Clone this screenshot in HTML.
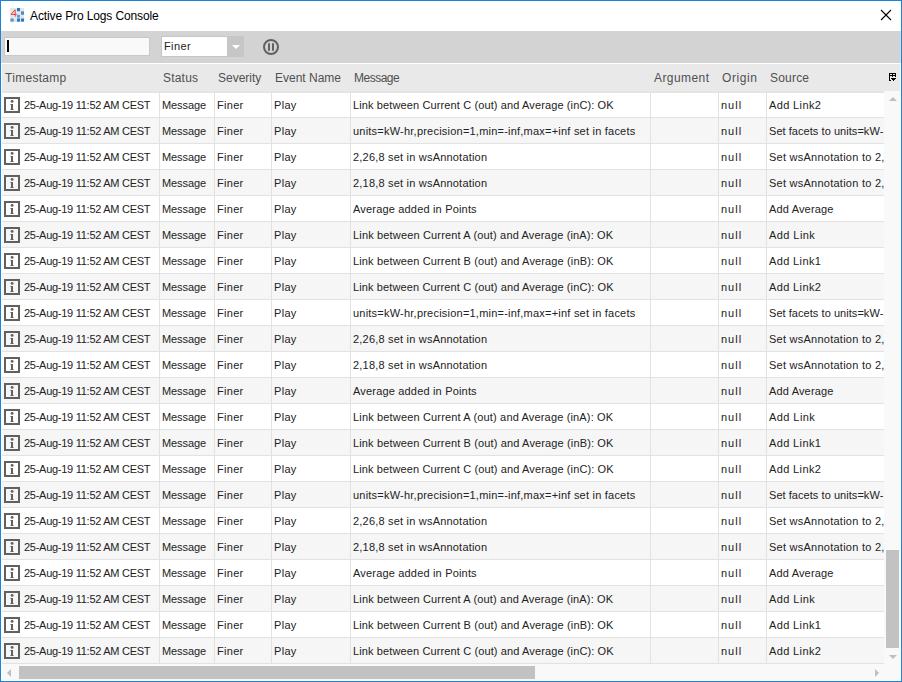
<!DOCTYPE html>
<html><head><meta charset="utf-8"><title>Active Pro Logs Console</title>
<style>
*{margin:0;padding:0;box-sizing:border-box}
html,body{width:902px;height:682px;overflow:hidden;background:#fff}
body{position:relative;font-family:"Liberation Sans",sans-serif;}
.a{position:absolute}
.t{position:absolute;white-space:nowrap;font-size:11px;line-height:13px;color:#222222}
.h{position:absolute;white-space:nowrap;font-size:12px;line-height:14px;color:#505050}
</style></head><body>

<div class="a" style="left:0;top:0;width:902px;height:682px;border:1px solid #1883d7;"></div>
<svg class="a" style="left:10px;top:8px" width="14" height="14" viewBox="0 0 14 14">
<rect x="0" y="0" width="14" height="14" fill="#e6e6e6"/>
<path d="M5 1.8 L1 6.4 L6.8 6.4 M5.1 1.8 L5.3 8.6" stroke="#e8383d" stroke-width="0.95" fill="none"/>
<rect x="7" y="0" width="3" height="3.2" fill="#1c7bd0"/>
<rect x="11" y="3.4" width="3" height="3.3" fill="#3d8fd6"/>
<rect x="7" y="6.9" width="3" height="2.8" fill="#5a9dd8"/>
<rect x="0.5" y="10.5" width="3.2" height="3.1" fill="#4d97d9"/>
<rect x="7" y="10.5" width="3" height="3.1" fill="#1c7bd0"/>
<rect x="11" y="10.5" width="3" height="3.1" fill="#1c7bd0"/>
</svg>
<div class="h" style="left:30px;top:9px;color:#000;letter-spacing:-0.12px">Active Pro Logs Console</div>
<svg class="a" style="left:880px;top:9px" width="13" height="13" viewBox="0 0 13 13"><path d="M1 1 L11 11 M11 1 L1 11" stroke="#000" stroke-width="1.1"/></svg>
<div class="a" style="left:1px;top:31px;width:900px;height:32px;background:#d3d3d3;border-left:1px solid #dedad8;border-right:1px solid #dedad8"></div>
<div class="a" style="left:4px;top:37px;width:146px;height:19px;background:#f9f9f9;border:1px solid #c8c8c8"></div>
<div class="a" style="left:7px;top:40px;width:2px;height:12px;background:#000"></div>
<div class="a" style="left:161px;top:36px;width:83px;height:21px;background:#c6c6c6"></div>
<div class="a" style="left:162px;top:37px;width:65px;height:19px;background:#fff"></div>
<div class="t" style="left:164px;top:40px;font-size:11px;letter-spacing:0.4px;color:#222222">Finer</div>
<svg class="a" style="left:232px;top:45px" width="8" height="4" viewBox="0 0 8 4"><path d="M0 0 L8 0 L4 4 Z" fill="#fff"/></svg>
<svg class="a" style="left:263px;top:39px" width="16" height="16" viewBox="0 0 16 16"><circle cx="8" cy="8" r="7" stroke="#626262" stroke-width="2" fill="none"/><rect x="5" y="4" width="2" height="8" rx="1" fill="#626262"/><rect x="9" y="4" width="2" height="8" rx="1" fill="#626262"/></svg>
<div class="a" style="left:2px;top:64px;width:898px;height:27px;background:#e9e9e9"></div>
<div class="a" style="left:2px;top:91px;width:882px;height:2px;background:#e4e4e4"></div>
<div class="h" style="left:5px;top:71px;letter-spacing:0.3px">Timestamp</div>
<div class="h" style="left:163px;top:71px;letter-spacing:0.2px">Status</div>
<div class="h" style="left:218px;top:71px;letter-spacing:0px">Severity</div>
<div class="h" style="left:275px;top:71px;letter-spacing:0px">Event Name</div>
<div class="h" style="left:354px;top:71px;letter-spacing:-0.5px">Message</div>
<div class="h" style="left:654px;top:71px;letter-spacing:0.43px">Argument</div>
<div class="h" style="left:722px;top:71px;letter-spacing:0.6px">Origin</div>
<div class="h" style="left:770px;top:71px;letter-spacing:0.2px">Source</div>
<svg class="a" style="left:889px;top:73px" width="8" height="8" viewBox="0 0 8 8" shape-rendering="crispEdges">
<path d="M0 0h7v1h-7z M0 2h7v1h-7z M0 0h1v8h-1z M3 0h1v4h-1z M6 0h1v4h-1z M1 7h1v1h-1z M2 5h5v1h-5z M3 6h3v1h-3z M4 7h1v1h-1z" fill="#000"/>
</svg>
<div class="a" style="left:2px;top:93px;width:882px;height:571px;overflow:hidden">
<div class="a" style="left:0;top:-1px;width:882px;height:26px;background:#ffffff;border-bottom:1px solid #e2e2e2">
<div class="a" style="left:157px;top:0;width:1px;height:26px;background:#e2e2e2"></div>
<div class="a" style="left:212px;top:0;width:1px;height:26px;background:#e2e2e2"></div>
<div class="a" style="left:269px;top:0;width:1px;height:26px;background:#e2e2e2"></div>
<div class="a" style="left:348px;top:0;width:1px;height:26px;background:#e2e2e2"></div>
<div class="a" style="left:648px;top:0;width:1px;height:26px;background:#e2e2e2"></div>
<div class="a" style="left:716px;top:0;width:1px;height:26px;background:#e2e2e2"></div>
<div class="a" style="left:764px;top:0;width:1px;height:26px;background:#e2e2e2"></div>
<svg class="a" style="left:2px;top:5px" width="16" height="16" viewBox="0 0 16 16" shape-rendering="crispEdges"><path d="M0 0h16v16h-16z M2 2v12h12v-12z" fill="#606060" fill-rule="evenodd"/><circle cx="8.1" cy="4.4" r="1.45" fill="#606060" shape-rendering="auto"/><path d="M7 7h2v6h-2z" fill="#606060"/><path d="M6 6.6h1v1.4h-1z M6 12h1v1h-1z M9 12h1v1h-1z" fill="#606060" opacity="0.55"/></svg>
<div class="t" style="left:22px;top:7px;letter-spacing:-0.27px">25-Aug-19 11:52 AM CEST</div>
<div class="t" style="left:160px;top:7px;letter-spacing:-0.1px">Message</div>
<div class="t" style="left:215px;top:7px;letter-spacing:0.3px">Finer</div>
<div class="t" style="left:272px;top:7px;letter-spacing:0.3px">Play</div>
<div class="t" style="left:351px;top:7px;letter-spacing:0.12px">Link between Current C (out) and Average (inC): OK</div>
<div class="t" style="left:719px;top:7px;letter-spacing:1.0px">null</div>
<div class="t" style="left:767px;top:7px;letter-spacing:0.37px">Add Link2</div>
</div>
<div class="a" style="left:0;top:25px;width:882px;height:26px;background:#f6f6f6;border-bottom:1px solid #e2e2e2">
<div class="a" style="left:157px;top:0;width:1px;height:26px;background:#e2e2e2"></div>
<div class="a" style="left:212px;top:0;width:1px;height:26px;background:#e2e2e2"></div>
<div class="a" style="left:269px;top:0;width:1px;height:26px;background:#e2e2e2"></div>
<div class="a" style="left:348px;top:0;width:1px;height:26px;background:#e2e2e2"></div>
<div class="a" style="left:648px;top:0;width:1px;height:26px;background:#e2e2e2"></div>
<div class="a" style="left:716px;top:0;width:1px;height:26px;background:#e2e2e2"></div>
<div class="a" style="left:764px;top:0;width:1px;height:26px;background:#e2e2e2"></div>
<svg class="a" style="left:2px;top:5px" width="16" height="16" viewBox="0 0 16 16" shape-rendering="crispEdges"><path d="M0 0h16v16h-16z M2 2v12h12v-12z" fill="#606060" fill-rule="evenodd"/><circle cx="8.1" cy="4.4" r="1.45" fill="#606060" shape-rendering="auto"/><path d="M7 7h2v6h-2z" fill="#606060"/><path d="M6 6.6h1v1.4h-1z M6 12h1v1h-1z M9 12h1v1h-1z" fill="#606060" opacity="0.55"/></svg>
<div class="t" style="left:22px;top:7px;letter-spacing:-0.27px">25-Aug-19 11:52 AM CEST</div>
<div class="t" style="left:160px;top:7px;letter-spacing:-0.1px">Message</div>
<div class="t" style="left:215px;top:7px;letter-spacing:0.3px">Finer</div>
<div class="t" style="left:272px;top:7px;letter-spacing:0.3px">Play</div>
<div class="t" style="left:351px;top:7px;letter-spacing:0.22px">units=kW-hr,precision=1,min=-inf,max=+inf set in facets</div>
<div class="t" style="left:719px;top:7px;letter-spacing:1.0px">null</div>
<div class="t" style="left:767px;top:7px;letter-spacing:0.05px">Set facets to units=kW-</div>
</div>
<div class="a" style="left:0;top:51px;width:882px;height:26px;background:#ffffff;border-bottom:1px solid #e2e2e2">
<div class="a" style="left:157px;top:0;width:1px;height:26px;background:#e2e2e2"></div>
<div class="a" style="left:212px;top:0;width:1px;height:26px;background:#e2e2e2"></div>
<div class="a" style="left:269px;top:0;width:1px;height:26px;background:#e2e2e2"></div>
<div class="a" style="left:348px;top:0;width:1px;height:26px;background:#e2e2e2"></div>
<div class="a" style="left:648px;top:0;width:1px;height:26px;background:#e2e2e2"></div>
<div class="a" style="left:716px;top:0;width:1px;height:26px;background:#e2e2e2"></div>
<div class="a" style="left:764px;top:0;width:1px;height:26px;background:#e2e2e2"></div>
<svg class="a" style="left:2px;top:5px" width="16" height="16" viewBox="0 0 16 16" shape-rendering="crispEdges"><path d="M0 0h16v16h-16z M2 2v12h12v-12z" fill="#606060" fill-rule="evenodd"/><circle cx="8.1" cy="4.4" r="1.45" fill="#606060" shape-rendering="auto"/><path d="M7 7h2v6h-2z" fill="#606060"/><path d="M6 6.6h1v1.4h-1z M6 12h1v1h-1z M9 12h1v1h-1z" fill="#606060" opacity="0.55"/></svg>
<div class="t" style="left:22px;top:7px;letter-spacing:-0.27px">25-Aug-19 11:52 AM CEST</div>
<div class="t" style="left:160px;top:7px;letter-spacing:-0.1px">Message</div>
<div class="t" style="left:215px;top:7px;letter-spacing:0.3px">Finer</div>
<div class="t" style="left:272px;top:7px;letter-spacing:0.3px">Play</div>
<div class="t" style="left:351px;top:7px;letter-spacing:0.2px">2,26,8 set in wsAnnotation</div>
<div class="t" style="left:719px;top:7px;letter-spacing:1.0px">null</div>
<div class="t" style="left:767px;top:7px;letter-spacing:0.25px">Set wsAnnotation to 2,</div>
</div>
<div class="a" style="left:0;top:77px;width:882px;height:26px;background:#f6f6f6;border-bottom:1px solid #e2e2e2">
<div class="a" style="left:157px;top:0;width:1px;height:26px;background:#e2e2e2"></div>
<div class="a" style="left:212px;top:0;width:1px;height:26px;background:#e2e2e2"></div>
<div class="a" style="left:269px;top:0;width:1px;height:26px;background:#e2e2e2"></div>
<div class="a" style="left:348px;top:0;width:1px;height:26px;background:#e2e2e2"></div>
<div class="a" style="left:648px;top:0;width:1px;height:26px;background:#e2e2e2"></div>
<div class="a" style="left:716px;top:0;width:1px;height:26px;background:#e2e2e2"></div>
<div class="a" style="left:764px;top:0;width:1px;height:26px;background:#e2e2e2"></div>
<svg class="a" style="left:2px;top:5px" width="16" height="16" viewBox="0 0 16 16" shape-rendering="crispEdges"><path d="M0 0h16v16h-16z M2 2v12h12v-12z" fill="#606060" fill-rule="evenodd"/><circle cx="8.1" cy="4.4" r="1.45" fill="#606060" shape-rendering="auto"/><path d="M7 7h2v6h-2z" fill="#606060"/><path d="M6 6.6h1v1.4h-1z M6 12h1v1h-1z M9 12h1v1h-1z" fill="#606060" opacity="0.55"/></svg>
<div class="t" style="left:22px;top:7px;letter-spacing:-0.27px">25-Aug-19 11:52 AM CEST</div>
<div class="t" style="left:160px;top:7px;letter-spacing:-0.1px">Message</div>
<div class="t" style="left:215px;top:7px;letter-spacing:0.3px">Finer</div>
<div class="t" style="left:272px;top:7px;letter-spacing:0.3px">Play</div>
<div class="t" style="left:351px;top:7px;letter-spacing:0.2px">2,18,8 set in wsAnnotation</div>
<div class="t" style="left:719px;top:7px;letter-spacing:1.0px">null</div>
<div class="t" style="left:767px;top:7px;letter-spacing:0.25px">Set wsAnnotation to 2,</div>
</div>
<div class="a" style="left:0;top:103px;width:882px;height:26px;background:#ffffff;border-bottom:1px solid #e2e2e2">
<div class="a" style="left:157px;top:0;width:1px;height:26px;background:#e2e2e2"></div>
<div class="a" style="left:212px;top:0;width:1px;height:26px;background:#e2e2e2"></div>
<div class="a" style="left:269px;top:0;width:1px;height:26px;background:#e2e2e2"></div>
<div class="a" style="left:348px;top:0;width:1px;height:26px;background:#e2e2e2"></div>
<div class="a" style="left:648px;top:0;width:1px;height:26px;background:#e2e2e2"></div>
<div class="a" style="left:716px;top:0;width:1px;height:26px;background:#e2e2e2"></div>
<div class="a" style="left:764px;top:0;width:1px;height:26px;background:#e2e2e2"></div>
<svg class="a" style="left:2px;top:5px" width="16" height="16" viewBox="0 0 16 16" shape-rendering="crispEdges"><path d="M0 0h16v16h-16z M2 2v12h12v-12z" fill="#606060" fill-rule="evenodd"/><circle cx="8.1" cy="4.4" r="1.45" fill="#606060" shape-rendering="auto"/><path d="M7 7h2v6h-2z" fill="#606060"/><path d="M6 6.6h1v1.4h-1z M6 12h1v1h-1z M9 12h1v1h-1z" fill="#606060" opacity="0.55"/></svg>
<div class="t" style="left:22px;top:7px;letter-spacing:-0.27px">25-Aug-19 11:52 AM CEST</div>
<div class="t" style="left:160px;top:7px;letter-spacing:-0.1px">Message</div>
<div class="t" style="left:215px;top:7px;letter-spacing:0.3px">Finer</div>
<div class="t" style="left:272px;top:7px;letter-spacing:0.3px">Play</div>
<div class="t" style="left:351px;top:7px;letter-spacing:0.18px">Average added in Points</div>
<div class="t" style="left:719px;top:7px;letter-spacing:1.0px">null</div>
<div class="t" style="left:767px;top:7px;letter-spacing:0.16px">Add Average</div>
</div>
<div class="a" style="left:0;top:129px;width:882px;height:26px;background:#f6f6f6;border-bottom:1px solid #e2e2e2">
<div class="a" style="left:157px;top:0;width:1px;height:26px;background:#e2e2e2"></div>
<div class="a" style="left:212px;top:0;width:1px;height:26px;background:#e2e2e2"></div>
<div class="a" style="left:269px;top:0;width:1px;height:26px;background:#e2e2e2"></div>
<div class="a" style="left:348px;top:0;width:1px;height:26px;background:#e2e2e2"></div>
<div class="a" style="left:648px;top:0;width:1px;height:26px;background:#e2e2e2"></div>
<div class="a" style="left:716px;top:0;width:1px;height:26px;background:#e2e2e2"></div>
<div class="a" style="left:764px;top:0;width:1px;height:26px;background:#e2e2e2"></div>
<svg class="a" style="left:2px;top:5px" width="16" height="16" viewBox="0 0 16 16" shape-rendering="crispEdges"><path d="M0 0h16v16h-16z M2 2v12h12v-12z" fill="#606060" fill-rule="evenodd"/><circle cx="8.1" cy="4.4" r="1.45" fill="#606060" shape-rendering="auto"/><path d="M7 7h2v6h-2z" fill="#606060"/><path d="M6 6.6h1v1.4h-1z M6 12h1v1h-1z M9 12h1v1h-1z" fill="#606060" opacity="0.55"/></svg>
<div class="t" style="left:22px;top:7px;letter-spacing:-0.27px">25-Aug-19 11:52 AM CEST</div>
<div class="t" style="left:160px;top:7px;letter-spacing:-0.1px">Message</div>
<div class="t" style="left:215px;top:7px;letter-spacing:0.3px">Finer</div>
<div class="t" style="left:272px;top:7px;letter-spacing:0.3px">Play</div>
<div class="t" style="left:351px;top:7px;letter-spacing:0.16px">Link between Current A (out) and Average (inA): OK</div>
<div class="t" style="left:719px;top:7px;letter-spacing:1.0px">null</div>
<div class="t" style="left:767px;top:7px;letter-spacing:0.43px">Add Link</div>
</div>
<div class="a" style="left:0;top:155px;width:882px;height:26px;background:#ffffff;border-bottom:1px solid #e2e2e2">
<div class="a" style="left:157px;top:0;width:1px;height:26px;background:#e2e2e2"></div>
<div class="a" style="left:212px;top:0;width:1px;height:26px;background:#e2e2e2"></div>
<div class="a" style="left:269px;top:0;width:1px;height:26px;background:#e2e2e2"></div>
<div class="a" style="left:348px;top:0;width:1px;height:26px;background:#e2e2e2"></div>
<div class="a" style="left:648px;top:0;width:1px;height:26px;background:#e2e2e2"></div>
<div class="a" style="left:716px;top:0;width:1px;height:26px;background:#e2e2e2"></div>
<div class="a" style="left:764px;top:0;width:1px;height:26px;background:#e2e2e2"></div>
<svg class="a" style="left:2px;top:5px" width="16" height="16" viewBox="0 0 16 16" shape-rendering="crispEdges"><path d="M0 0h16v16h-16z M2 2v12h12v-12z" fill="#606060" fill-rule="evenodd"/><circle cx="8.1" cy="4.4" r="1.45" fill="#606060" shape-rendering="auto"/><path d="M7 7h2v6h-2z" fill="#606060"/><path d="M6 6.6h1v1.4h-1z M6 12h1v1h-1z M9 12h1v1h-1z" fill="#606060" opacity="0.55"/></svg>
<div class="t" style="left:22px;top:7px;letter-spacing:-0.27px">25-Aug-19 11:52 AM CEST</div>
<div class="t" style="left:160px;top:7px;letter-spacing:-0.1px">Message</div>
<div class="t" style="left:215px;top:7px;letter-spacing:0.3px">Finer</div>
<div class="t" style="left:272px;top:7px;letter-spacing:0.3px">Play</div>
<div class="t" style="left:351px;top:7px;letter-spacing:0.14px">Link between Current B (out) and Average (inB): OK</div>
<div class="t" style="left:719px;top:7px;letter-spacing:1.0px">null</div>
<div class="t" style="left:767px;top:7px;letter-spacing:0.37px">Add Link1</div>
</div>
<div class="a" style="left:0;top:181px;width:882px;height:26px;background:#f6f6f6;border-bottom:1px solid #e2e2e2">
<div class="a" style="left:157px;top:0;width:1px;height:26px;background:#e2e2e2"></div>
<div class="a" style="left:212px;top:0;width:1px;height:26px;background:#e2e2e2"></div>
<div class="a" style="left:269px;top:0;width:1px;height:26px;background:#e2e2e2"></div>
<div class="a" style="left:348px;top:0;width:1px;height:26px;background:#e2e2e2"></div>
<div class="a" style="left:648px;top:0;width:1px;height:26px;background:#e2e2e2"></div>
<div class="a" style="left:716px;top:0;width:1px;height:26px;background:#e2e2e2"></div>
<div class="a" style="left:764px;top:0;width:1px;height:26px;background:#e2e2e2"></div>
<svg class="a" style="left:2px;top:5px" width="16" height="16" viewBox="0 0 16 16" shape-rendering="crispEdges"><path d="M0 0h16v16h-16z M2 2v12h12v-12z" fill="#606060" fill-rule="evenodd"/><circle cx="8.1" cy="4.4" r="1.45" fill="#606060" shape-rendering="auto"/><path d="M7 7h2v6h-2z" fill="#606060"/><path d="M6 6.6h1v1.4h-1z M6 12h1v1h-1z M9 12h1v1h-1z" fill="#606060" opacity="0.55"/></svg>
<div class="t" style="left:22px;top:7px;letter-spacing:-0.27px">25-Aug-19 11:52 AM CEST</div>
<div class="t" style="left:160px;top:7px;letter-spacing:-0.1px">Message</div>
<div class="t" style="left:215px;top:7px;letter-spacing:0.3px">Finer</div>
<div class="t" style="left:272px;top:7px;letter-spacing:0.3px">Play</div>
<div class="t" style="left:351px;top:7px;letter-spacing:0.12px">Link between Current C (out) and Average (inC): OK</div>
<div class="t" style="left:719px;top:7px;letter-spacing:1.0px">null</div>
<div class="t" style="left:767px;top:7px;letter-spacing:0.37px">Add Link2</div>
</div>
<div class="a" style="left:0;top:207px;width:882px;height:26px;background:#ffffff;border-bottom:1px solid #e2e2e2">
<div class="a" style="left:157px;top:0;width:1px;height:26px;background:#e2e2e2"></div>
<div class="a" style="left:212px;top:0;width:1px;height:26px;background:#e2e2e2"></div>
<div class="a" style="left:269px;top:0;width:1px;height:26px;background:#e2e2e2"></div>
<div class="a" style="left:348px;top:0;width:1px;height:26px;background:#e2e2e2"></div>
<div class="a" style="left:648px;top:0;width:1px;height:26px;background:#e2e2e2"></div>
<div class="a" style="left:716px;top:0;width:1px;height:26px;background:#e2e2e2"></div>
<div class="a" style="left:764px;top:0;width:1px;height:26px;background:#e2e2e2"></div>
<svg class="a" style="left:2px;top:5px" width="16" height="16" viewBox="0 0 16 16" shape-rendering="crispEdges"><path d="M0 0h16v16h-16z M2 2v12h12v-12z" fill="#606060" fill-rule="evenodd"/><circle cx="8.1" cy="4.4" r="1.45" fill="#606060" shape-rendering="auto"/><path d="M7 7h2v6h-2z" fill="#606060"/><path d="M6 6.6h1v1.4h-1z M6 12h1v1h-1z M9 12h1v1h-1z" fill="#606060" opacity="0.55"/></svg>
<div class="t" style="left:22px;top:7px;letter-spacing:-0.27px">25-Aug-19 11:52 AM CEST</div>
<div class="t" style="left:160px;top:7px;letter-spacing:-0.1px">Message</div>
<div class="t" style="left:215px;top:7px;letter-spacing:0.3px">Finer</div>
<div class="t" style="left:272px;top:7px;letter-spacing:0.3px">Play</div>
<div class="t" style="left:351px;top:7px;letter-spacing:0.22px">units=kW-hr,precision=1,min=-inf,max=+inf set in facets</div>
<div class="t" style="left:719px;top:7px;letter-spacing:1.0px">null</div>
<div class="t" style="left:767px;top:7px;letter-spacing:0.05px">Set facets to units=kW-</div>
</div>
<div class="a" style="left:0;top:233px;width:882px;height:26px;background:#f6f6f6;border-bottom:1px solid #e2e2e2">
<div class="a" style="left:157px;top:0;width:1px;height:26px;background:#e2e2e2"></div>
<div class="a" style="left:212px;top:0;width:1px;height:26px;background:#e2e2e2"></div>
<div class="a" style="left:269px;top:0;width:1px;height:26px;background:#e2e2e2"></div>
<div class="a" style="left:348px;top:0;width:1px;height:26px;background:#e2e2e2"></div>
<div class="a" style="left:648px;top:0;width:1px;height:26px;background:#e2e2e2"></div>
<div class="a" style="left:716px;top:0;width:1px;height:26px;background:#e2e2e2"></div>
<div class="a" style="left:764px;top:0;width:1px;height:26px;background:#e2e2e2"></div>
<svg class="a" style="left:2px;top:5px" width="16" height="16" viewBox="0 0 16 16" shape-rendering="crispEdges"><path d="M0 0h16v16h-16z M2 2v12h12v-12z" fill="#606060" fill-rule="evenodd"/><circle cx="8.1" cy="4.4" r="1.45" fill="#606060" shape-rendering="auto"/><path d="M7 7h2v6h-2z" fill="#606060"/><path d="M6 6.6h1v1.4h-1z M6 12h1v1h-1z M9 12h1v1h-1z" fill="#606060" opacity="0.55"/></svg>
<div class="t" style="left:22px;top:7px;letter-spacing:-0.27px">25-Aug-19 11:52 AM CEST</div>
<div class="t" style="left:160px;top:7px;letter-spacing:-0.1px">Message</div>
<div class="t" style="left:215px;top:7px;letter-spacing:0.3px">Finer</div>
<div class="t" style="left:272px;top:7px;letter-spacing:0.3px">Play</div>
<div class="t" style="left:351px;top:7px;letter-spacing:0.2px">2,26,8 set in wsAnnotation</div>
<div class="t" style="left:719px;top:7px;letter-spacing:1.0px">null</div>
<div class="t" style="left:767px;top:7px;letter-spacing:0.25px">Set wsAnnotation to 2,</div>
</div>
<div class="a" style="left:0;top:259px;width:882px;height:26px;background:#ffffff;border-bottom:1px solid #e2e2e2">
<div class="a" style="left:157px;top:0;width:1px;height:26px;background:#e2e2e2"></div>
<div class="a" style="left:212px;top:0;width:1px;height:26px;background:#e2e2e2"></div>
<div class="a" style="left:269px;top:0;width:1px;height:26px;background:#e2e2e2"></div>
<div class="a" style="left:348px;top:0;width:1px;height:26px;background:#e2e2e2"></div>
<div class="a" style="left:648px;top:0;width:1px;height:26px;background:#e2e2e2"></div>
<div class="a" style="left:716px;top:0;width:1px;height:26px;background:#e2e2e2"></div>
<div class="a" style="left:764px;top:0;width:1px;height:26px;background:#e2e2e2"></div>
<svg class="a" style="left:2px;top:5px" width="16" height="16" viewBox="0 0 16 16" shape-rendering="crispEdges"><path d="M0 0h16v16h-16z M2 2v12h12v-12z" fill="#606060" fill-rule="evenodd"/><circle cx="8.1" cy="4.4" r="1.45" fill="#606060" shape-rendering="auto"/><path d="M7 7h2v6h-2z" fill="#606060"/><path d="M6 6.6h1v1.4h-1z M6 12h1v1h-1z M9 12h1v1h-1z" fill="#606060" opacity="0.55"/></svg>
<div class="t" style="left:22px;top:7px;letter-spacing:-0.27px">25-Aug-19 11:52 AM CEST</div>
<div class="t" style="left:160px;top:7px;letter-spacing:-0.1px">Message</div>
<div class="t" style="left:215px;top:7px;letter-spacing:0.3px">Finer</div>
<div class="t" style="left:272px;top:7px;letter-spacing:0.3px">Play</div>
<div class="t" style="left:351px;top:7px;letter-spacing:0.2px">2,18,8 set in wsAnnotation</div>
<div class="t" style="left:719px;top:7px;letter-spacing:1.0px">null</div>
<div class="t" style="left:767px;top:7px;letter-spacing:0.25px">Set wsAnnotation to 2,</div>
</div>
<div class="a" style="left:0;top:285px;width:882px;height:26px;background:#f6f6f6;border-bottom:1px solid #e2e2e2">
<div class="a" style="left:157px;top:0;width:1px;height:26px;background:#e2e2e2"></div>
<div class="a" style="left:212px;top:0;width:1px;height:26px;background:#e2e2e2"></div>
<div class="a" style="left:269px;top:0;width:1px;height:26px;background:#e2e2e2"></div>
<div class="a" style="left:348px;top:0;width:1px;height:26px;background:#e2e2e2"></div>
<div class="a" style="left:648px;top:0;width:1px;height:26px;background:#e2e2e2"></div>
<div class="a" style="left:716px;top:0;width:1px;height:26px;background:#e2e2e2"></div>
<div class="a" style="left:764px;top:0;width:1px;height:26px;background:#e2e2e2"></div>
<svg class="a" style="left:2px;top:5px" width="16" height="16" viewBox="0 0 16 16" shape-rendering="crispEdges"><path d="M0 0h16v16h-16z M2 2v12h12v-12z" fill="#606060" fill-rule="evenodd"/><circle cx="8.1" cy="4.4" r="1.45" fill="#606060" shape-rendering="auto"/><path d="M7 7h2v6h-2z" fill="#606060"/><path d="M6 6.6h1v1.4h-1z M6 12h1v1h-1z M9 12h1v1h-1z" fill="#606060" opacity="0.55"/></svg>
<div class="t" style="left:22px;top:7px;letter-spacing:-0.27px">25-Aug-19 11:52 AM CEST</div>
<div class="t" style="left:160px;top:7px;letter-spacing:-0.1px">Message</div>
<div class="t" style="left:215px;top:7px;letter-spacing:0.3px">Finer</div>
<div class="t" style="left:272px;top:7px;letter-spacing:0.3px">Play</div>
<div class="t" style="left:351px;top:7px;letter-spacing:0.18px">Average added in Points</div>
<div class="t" style="left:719px;top:7px;letter-spacing:1.0px">null</div>
<div class="t" style="left:767px;top:7px;letter-spacing:0.16px">Add Average</div>
</div>
<div class="a" style="left:0;top:311px;width:882px;height:26px;background:#ffffff;border-bottom:1px solid #e2e2e2">
<div class="a" style="left:157px;top:0;width:1px;height:26px;background:#e2e2e2"></div>
<div class="a" style="left:212px;top:0;width:1px;height:26px;background:#e2e2e2"></div>
<div class="a" style="left:269px;top:0;width:1px;height:26px;background:#e2e2e2"></div>
<div class="a" style="left:348px;top:0;width:1px;height:26px;background:#e2e2e2"></div>
<div class="a" style="left:648px;top:0;width:1px;height:26px;background:#e2e2e2"></div>
<div class="a" style="left:716px;top:0;width:1px;height:26px;background:#e2e2e2"></div>
<div class="a" style="left:764px;top:0;width:1px;height:26px;background:#e2e2e2"></div>
<svg class="a" style="left:2px;top:5px" width="16" height="16" viewBox="0 0 16 16" shape-rendering="crispEdges"><path d="M0 0h16v16h-16z M2 2v12h12v-12z" fill="#606060" fill-rule="evenodd"/><circle cx="8.1" cy="4.4" r="1.45" fill="#606060" shape-rendering="auto"/><path d="M7 7h2v6h-2z" fill="#606060"/><path d="M6 6.6h1v1.4h-1z M6 12h1v1h-1z M9 12h1v1h-1z" fill="#606060" opacity="0.55"/></svg>
<div class="t" style="left:22px;top:7px;letter-spacing:-0.27px">25-Aug-19 11:52 AM CEST</div>
<div class="t" style="left:160px;top:7px;letter-spacing:-0.1px">Message</div>
<div class="t" style="left:215px;top:7px;letter-spacing:0.3px">Finer</div>
<div class="t" style="left:272px;top:7px;letter-spacing:0.3px">Play</div>
<div class="t" style="left:351px;top:7px;letter-spacing:0.16px">Link between Current A (out) and Average (inA): OK</div>
<div class="t" style="left:719px;top:7px;letter-spacing:1.0px">null</div>
<div class="t" style="left:767px;top:7px;letter-spacing:0.43px">Add Link</div>
</div>
<div class="a" style="left:0;top:337px;width:882px;height:26px;background:#f6f6f6;border-bottom:1px solid #e2e2e2">
<div class="a" style="left:157px;top:0;width:1px;height:26px;background:#e2e2e2"></div>
<div class="a" style="left:212px;top:0;width:1px;height:26px;background:#e2e2e2"></div>
<div class="a" style="left:269px;top:0;width:1px;height:26px;background:#e2e2e2"></div>
<div class="a" style="left:348px;top:0;width:1px;height:26px;background:#e2e2e2"></div>
<div class="a" style="left:648px;top:0;width:1px;height:26px;background:#e2e2e2"></div>
<div class="a" style="left:716px;top:0;width:1px;height:26px;background:#e2e2e2"></div>
<div class="a" style="left:764px;top:0;width:1px;height:26px;background:#e2e2e2"></div>
<svg class="a" style="left:2px;top:5px" width="16" height="16" viewBox="0 0 16 16" shape-rendering="crispEdges"><path d="M0 0h16v16h-16z M2 2v12h12v-12z" fill="#606060" fill-rule="evenodd"/><circle cx="8.1" cy="4.4" r="1.45" fill="#606060" shape-rendering="auto"/><path d="M7 7h2v6h-2z" fill="#606060"/><path d="M6 6.6h1v1.4h-1z M6 12h1v1h-1z M9 12h1v1h-1z" fill="#606060" opacity="0.55"/></svg>
<div class="t" style="left:22px;top:7px;letter-spacing:-0.27px">25-Aug-19 11:52 AM CEST</div>
<div class="t" style="left:160px;top:7px;letter-spacing:-0.1px">Message</div>
<div class="t" style="left:215px;top:7px;letter-spacing:0.3px">Finer</div>
<div class="t" style="left:272px;top:7px;letter-spacing:0.3px">Play</div>
<div class="t" style="left:351px;top:7px;letter-spacing:0.14px">Link between Current B (out) and Average (inB): OK</div>
<div class="t" style="left:719px;top:7px;letter-spacing:1.0px">null</div>
<div class="t" style="left:767px;top:7px;letter-spacing:0.37px">Add Link1</div>
</div>
<div class="a" style="left:0;top:363px;width:882px;height:26px;background:#ffffff;border-bottom:1px solid #e2e2e2">
<div class="a" style="left:157px;top:0;width:1px;height:26px;background:#e2e2e2"></div>
<div class="a" style="left:212px;top:0;width:1px;height:26px;background:#e2e2e2"></div>
<div class="a" style="left:269px;top:0;width:1px;height:26px;background:#e2e2e2"></div>
<div class="a" style="left:348px;top:0;width:1px;height:26px;background:#e2e2e2"></div>
<div class="a" style="left:648px;top:0;width:1px;height:26px;background:#e2e2e2"></div>
<div class="a" style="left:716px;top:0;width:1px;height:26px;background:#e2e2e2"></div>
<div class="a" style="left:764px;top:0;width:1px;height:26px;background:#e2e2e2"></div>
<svg class="a" style="left:2px;top:5px" width="16" height="16" viewBox="0 0 16 16" shape-rendering="crispEdges"><path d="M0 0h16v16h-16z M2 2v12h12v-12z" fill="#606060" fill-rule="evenodd"/><circle cx="8.1" cy="4.4" r="1.45" fill="#606060" shape-rendering="auto"/><path d="M7 7h2v6h-2z" fill="#606060"/><path d="M6 6.6h1v1.4h-1z M6 12h1v1h-1z M9 12h1v1h-1z" fill="#606060" opacity="0.55"/></svg>
<div class="t" style="left:22px;top:7px;letter-spacing:-0.27px">25-Aug-19 11:52 AM CEST</div>
<div class="t" style="left:160px;top:7px;letter-spacing:-0.1px">Message</div>
<div class="t" style="left:215px;top:7px;letter-spacing:0.3px">Finer</div>
<div class="t" style="left:272px;top:7px;letter-spacing:0.3px">Play</div>
<div class="t" style="left:351px;top:7px;letter-spacing:0.12px">Link between Current C (out) and Average (inC): OK</div>
<div class="t" style="left:719px;top:7px;letter-spacing:1.0px">null</div>
<div class="t" style="left:767px;top:7px;letter-spacing:0.37px">Add Link2</div>
</div>
<div class="a" style="left:0;top:389px;width:882px;height:26px;background:#f6f6f6;border-bottom:1px solid #e2e2e2">
<div class="a" style="left:157px;top:0;width:1px;height:26px;background:#e2e2e2"></div>
<div class="a" style="left:212px;top:0;width:1px;height:26px;background:#e2e2e2"></div>
<div class="a" style="left:269px;top:0;width:1px;height:26px;background:#e2e2e2"></div>
<div class="a" style="left:348px;top:0;width:1px;height:26px;background:#e2e2e2"></div>
<div class="a" style="left:648px;top:0;width:1px;height:26px;background:#e2e2e2"></div>
<div class="a" style="left:716px;top:0;width:1px;height:26px;background:#e2e2e2"></div>
<div class="a" style="left:764px;top:0;width:1px;height:26px;background:#e2e2e2"></div>
<svg class="a" style="left:2px;top:5px" width="16" height="16" viewBox="0 0 16 16" shape-rendering="crispEdges"><path d="M0 0h16v16h-16z M2 2v12h12v-12z" fill="#606060" fill-rule="evenodd"/><circle cx="8.1" cy="4.4" r="1.45" fill="#606060" shape-rendering="auto"/><path d="M7 7h2v6h-2z" fill="#606060"/><path d="M6 6.6h1v1.4h-1z M6 12h1v1h-1z M9 12h1v1h-1z" fill="#606060" opacity="0.55"/></svg>
<div class="t" style="left:22px;top:7px;letter-spacing:-0.27px">25-Aug-19 11:52 AM CEST</div>
<div class="t" style="left:160px;top:7px;letter-spacing:-0.1px">Message</div>
<div class="t" style="left:215px;top:7px;letter-spacing:0.3px">Finer</div>
<div class="t" style="left:272px;top:7px;letter-spacing:0.3px">Play</div>
<div class="t" style="left:351px;top:7px;letter-spacing:0.22px">units=kW-hr,precision=1,min=-inf,max=+inf set in facets</div>
<div class="t" style="left:719px;top:7px;letter-spacing:1.0px">null</div>
<div class="t" style="left:767px;top:7px;letter-spacing:0.05px">Set facets to units=kW-</div>
</div>
<div class="a" style="left:0;top:415px;width:882px;height:26px;background:#ffffff;border-bottom:1px solid #e2e2e2">
<div class="a" style="left:157px;top:0;width:1px;height:26px;background:#e2e2e2"></div>
<div class="a" style="left:212px;top:0;width:1px;height:26px;background:#e2e2e2"></div>
<div class="a" style="left:269px;top:0;width:1px;height:26px;background:#e2e2e2"></div>
<div class="a" style="left:348px;top:0;width:1px;height:26px;background:#e2e2e2"></div>
<div class="a" style="left:648px;top:0;width:1px;height:26px;background:#e2e2e2"></div>
<div class="a" style="left:716px;top:0;width:1px;height:26px;background:#e2e2e2"></div>
<div class="a" style="left:764px;top:0;width:1px;height:26px;background:#e2e2e2"></div>
<svg class="a" style="left:2px;top:5px" width="16" height="16" viewBox="0 0 16 16" shape-rendering="crispEdges"><path d="M0 0h16v16h-16z M2 2v12h12v-12z" fill="#606060" fill-rule="evenodd"/><circle cx="8.1" cy="4.4" r="1.45" fill="#606060" shape-rendering="auto"/><path d="M7 7h2v6h-2z" fill="#606060"/><path d="M6 6.6h1v1.4h-1z M6 12h1v1h-1z M9 12h1v1h-1z" fill="#606060" opacity="0.55"/></svg>
<div class="t" style="left:22px;top:7px;letter-spacing:-0.27px">25-Aug-19 11:52 AM CEST</div>
<div class="t" style="left:160px;top:7px;letter-spacing:-0.1px">Message</div>
<div class="t" style="left:215px;top:7px;letter-spacing:0.3px">Finer</div>
<div class="t" style="left:272px;top:7px;letter-spacing:0.3px">Play</div>
<div class="t" style="left:351px;top:7px;letter-spacing:0.2px">2,26,8 set in wsAnnotation</div>
<div class="t" style="left:719px;top:7px;letter-spacing:1.0px">null</div>
<div class="t" style="left:767px;top:7px;letter-spacing:0.25px">Set wsAnnotation to 2,</div>
</div>
<div class="a" style="left:0;top:441px;width:882px;height:26px;background:#f6f6f6;border-bottom:1px solid #e2e2e2">
<div class="a" style="left:157px;top:0;width:1px;height:26px;background:#e2e2e2"></div>
<div class="a" style="left:212px;top:0;width:1px;height:26px;background:#e2e2e2"></div>
<div class="a" style="left:269px;top:0;width:1px;height:26px;background:#e2e2e2"></div>
<div class="a" style="left:348px;top:0;width:1px;height:26px;background:#e2e2e2"></div>
<div class="a" style="left:648px;top:0;width:1px;height:26px;background:#e2e2e2"></div>
<div class="a" style="left:716px;top:0;width:1px;height:26px;background:#e2e2e2"></div>
<div class="a" style="left:764px;top:0;width:1px;height:26px;background:#e2e2e2"></div>
<svg class="a" style="left:2px;top:5px" width="16" height="16" viewBox="0 0 16 16" shape-rendering="crispEdges"><path d="M0 0h16v16h-16z M2 2v12h12v-12z" fill="#606060" fill-rule="evenodd"/><circle cx="8.1" cy="4.4" r="1.45" fill="#606060" shape-rendering="auto"/><path d="M7 7h2v6h-2z" fill="#606060"/><path d="M6 6.6h1v1.4h-1z M6 12h1v1h-1z M9 12h1v1h-1z" fill="#606060" opacity="0.55"/></svg>
<div class="t" style="left:22px;top:7px;letter-spacing:-0.27px">25-Aug-19 11:52 AM CEST</div>
<div class="t" style="left:160px;top:7px;letter-spacing:-0.1px">Message</div>
<div class="t" style="left:215px;top:7px;letter-spacing:0.3px">Finer</div>
<div class="t" style="left:272px;top:7px;letter-spacing:0.3px">Play</div>
<div class="t" style="left:351px;top:7px;letter-spacing:0.2px">2,18,8 set in wsAnnotation</div>
<div class="t" style="left:719px;top:7px;letter-spacing:1.0px">null</div>
<div class="t" style="left:767px;top:7px;letter-spacing:0.25px">Set wsAnnotation to 2,</div>
</div>
<div class="a" style="left:0;top:467px;width:882px;height:26px;background:#ffffff;border-bottom:1px solid #e2e2e2">
<div class="a" style="left:157px;top:0;width:1px;height:26px;background:#e2e2e2"></div>
<div class="a" style="left:212px;top:0;width:1px;height:26px;background:#e2e2e2"></div>
<div class="a" style="left:269px;top:0;width:1px;height:26px;background:#e2e2e2"></div>
<div class="a" style="left:348px;top:0;width:1px;height:26px;background:#e2e2e2"></div>
<div class="a" style="left:648px;top:0;width:1px;height:26px;background:#e2e2e2"></div>
<div class="a" style="left:716px;top:0;width:1px;height:26px;background:#e2e2e2"></div>
<div class="a" style="left:764px;top:0;width:1px;height:26px;background:#e2e2e2"></div>
<svg class="a" style="left:2px;top:5px" width="16" height="16" viewBox="0 0 16 16" shape-rendering="crispEdges"><path d="M0 0h16v16h-16z M2 2v12h12v-12z" fill="#606060" fill-rule="evenodd"/><circle cx="8.1" cy="4.4" r="1.45" fill="#606060" shape-rendering="auto"/><path d="M7 7h2v6h-2z" fill="#606060"/><path d="M6 6.6h1v1.4h-1z M6 12h1v1h-1z M9 12h1v1h-1z" fill="#606060" opacity="0.55"/></svg>
<div class="t" style="left:22px;top:7px;letter-spacing:-0.27px">25-Aug-19 11:52 AM CEST</div>
<div class="t" style="left:160px;top:7px;letter-spacing:-0.1px">Message</div>
<div class="t" style="left:215px;top:7px;letter-spacing:0.3px">Finer</div>
<div class="t" style="left:272px;top:7px;letter-spacing:0.3px">Play</div>
<div class="t" style="left:351px;top:7px;letter-spacing:0.18px">Average added in Points</div>
<div class="t" style="left:719px;top:7px;letter-spacing:1.0px">null</div>
<div class="t" style="left:767px;top:7px;letter-spacing:0.16px">Add Average</div>
</div>
<div class="a" style="left:0;top:493px;width:882px;height:26px;background:#f6f6f6;border-bottom:1px solid #e2e2e2">
<div class="a" style="left:157px;top:0;width:1px;height:26px;background:#e2e2e2"></div>
<div class="a" style="left:212px;top:0;width:1px;height:26px;background:#e2e2e2"></div>
<div class="a" style="left:269px;top:0;width:1px;height:26px;background:#e2e2e2"></div>
<div class="a" style="left:348px;top:0;width:1px;height:26px;background:#e2e2e2"></div>
<div class="a" style="left:648px;top:0;width:1px;height:26px;background:#e2e2e2"></div>
<div class="a" style="left:716px;top:0;width:1px;height:26px;background:#e2e2e2"></div>
<div class="a" style="left:764px;top:0;width:1px;height:26px;background:#e2e2e2"></div>
<svg class="a" style="left:2px;top:5px" width="16" height="16" viewBox="0 0 16 16" shape-rendering="crispEdges"><path d="M0 0h16v16h-16z M2 2v12h12v-12z" fill="#606060" fill-rule="evenodd"/><circle cx="8.1" cy="4.4" r="1.45" fill="#606060" shape-rendering="auto"/><path d="M7 7h2v6h-2z" fill="#606060"/><path d="M6 6.6h1v1.4h-1z M6 12h1v1h-1z M9 12h1v1h-1z" fill="#606060" opacity="0.55"/></svg>
<div class="t" style="left:22px;top:7px;letter-spacing:-0.27px">25-Aug-19 11:52 AM CEST</div>
<div class="t" style="left:160px;top:7px;letter-spacing:-0.1px">Message</div>
<div class="t" style="left:215px;top:7px;letter-spacing:0.3px">Finer</div>
<div class="t" style="left:272px;top:7px;letter-spacing:0.3px">Play</div>
<div class="t" style="left:351px;top:7px;letter-spacing:0.16px">Link between Current A (out) and Average (inA): OK</div>
<div class="t" style="left:719px;top:7px;letter-spacing:1.0px">null</div>
<div class="t" style="left:767px;top:7px;letter-spacing:0.43px">Add Link</div>
</div>
<div class="a" style="left:0;top:519px;width:882px;height:26px;background:#ffffff;border-bottom:1px solid #e2e2e2">
<div class="a" style="left:157px;top:0;width:1px;height:26px;background:#e2e2e2"></div>
<div class="a" style="left:212px;top:0;width:1px;height:26px;background:#e2e2e2"></div>
<div class="a" style="left:269px;top:0;width:1px;height:26px;background:#e2e2e2"></div>
<div class="a" style="left:348px;top:0;width:1px;height:26px;background:#e2e2e2"></div>
<div class="a" style="left:648px;top:0;width:1px;height:26px;background:#e2e2e2"></div>
<div class="a" style="left:716px;top:0;width:1px;height:26px;background:#e2e2e2"></div>
<div class="a" style="left:764px;top:0;width:1px;height:26px;background:#e2e2e2"></div>
<svg class="a" style="left:2px;top:5px" width="16" height="16" viewBox="0 0 16 16" shape-rendering="crispEdges"><path d="M0 0h16v16h-16z M2 2v12h12v-12z" fill="#606060" fill-rule="evenodd"/><circle cx="8.1" cy="4.4" r="1.45" fill="#606060" shape-rendering="auto"/><path d="M7 7h2v6h-2z" fill="#606060"/><path d="M6 6.6h1v1.4h-1z M6 12h1v1h-1z M9 12h1v1h-1z" fill="#606060" opacity="0.55"/></svg>
<div class="t" style="left:22px;top:7px;letter-spacing:-0.27px">25-Aug-19 11:52 AM CEST</div>
<div class="t" style="left:160px;top:7px;letter-spacing:-0.1px">Message</div>
<div class="t" style="left:215px;top:7px;letter-spacing:0.3px">Finer</div>
<div class="t" style="left:272px;top:7px;letter-spacing:0.3px">Play</div>
<div class="t" style="left:351px;top:7px;letter-spacing:0.14px">Link between Current B (out) and Average (inB): OK</div>
<div class="t" style="left:719px;top:7px;letter-spacing:1.0px">null</div>
<div class="t" style="left:767px;top:7px;letter-spacing:0.37px">Add Link1</div>
</div>
<div class="a" style="left:0;top:545px;width:882px;height:26px;background:#f6f6f6;border-bottom:1px solid #e2e2e2">
<div class="a" style="left:157px;top:0;width:1px;height:26px;background:#e2e2e2"></div>
<div class="a" style="left:212px;top:0;width:1px;height:26px;background:#e2e2e2"></div>
<div class="a" style="left:269px;top:0;width:1px;height:26px;background:#e2e2e2"></div>
<div class="a" style="left:348px;top:0;width:1px;height:26px;background:#e2e2e2"></div>
<div class="a" style="left:648px;top:0;width:1px;height:26px;background:#e2e2e2"></div>
<div class="a" style="left:716px;top:0;width:1px;height:26px;background:#e2e2e2"></div>
<div class="a" style="left:764px;top:0;width:1px;height:26px;background:#e2e2e2"></div>
<svg class="a" style="left:2px;top:5px" width="16" height="16" viewBox="0 0 16 16" shape-rendering="crispEdges"><path d="M0 0h16v16h-16z M2 2v12h12v-12z" fill="#606060" fill-rule="evenodd"/><circle cx="8.1" cy="4.4" r="1.45" fill="#606060" shape-rendering="auto"/><path d="M7 7h2v6h-2z" fill="#606060"/><path d="M6 6.6h1v1.4h-1z M6 12h1v1h-1z M9 12h1v1h-1z" fill="#606060" opacity="0.55"/></svg>
<div class="t" style="left:22px;top:7px;letter-spacing:-0.27px">25-Aug-19 11:52 AM CEST</div>
<div class="t" style="left:160px;top:7px;letter-spacing:-0.1px">Message</div>
<div class="t" style="left:215px;top:7px;letter-spacing:0.3px">Finer</div>
<div class="t" style="left:272px;top:7px;letter-spacing:0.3px">Play</div>
<div class="t" style="left:351px;top:7px;letter-spacing:0.12px">Link between Current C (out) and Average (inC): OK</div>
<div class="t" style="left:719px;top:7px;letter-spacing:1.0px">null</div>
<div class="t" style="left:767px;top:7px;letter-spacing:0.37px">Add Link2</div>
</div>
</div>
<div class="a" style="left:884px;top:91px;width:16px;height:589px;background:#f9f9f9"></div>
<svg class="a" style="left:889px;top:97px" width="8" height="4" viewBox="0 0 8 4"><path d="M0 4 L8 4 L4 0 Z" fill="#bfbfbf"/></svg>
<div class="a" style="left:886px;top:550px;width:13px;height:98px;background:#c2c2c2"></div>
<svg class="a" style="left:889px;top:655px" width="8" height="4" viewBox="0 0 8 4"><path d="M0 0 L8 0 L4 4 Z" fill="#bfbfbf"/></svg>
<div class="a" style="left:2px;top:664px;width:882px;height:16px;background:#f9f9f9"></div>
<svg class="a" style="left:7px;top:669px" width="4" height="8" viewBox="0 0 4 8"><path d="M4 0 L4 8 L0 4 Z" fill="#bfbfbf"/></svg>
<div class="a" style="left:19px;top:666px;width:516px;height:13px;background:#c2c2c2"></div>
<svg class="a" style="left:875px;top:669px" width="4" height="8" viewBox="0 0 4 8"><path d="M0 0 L0 8 L4 4 Z" fill="#bfbfbf"/></svg>
</body></html>
